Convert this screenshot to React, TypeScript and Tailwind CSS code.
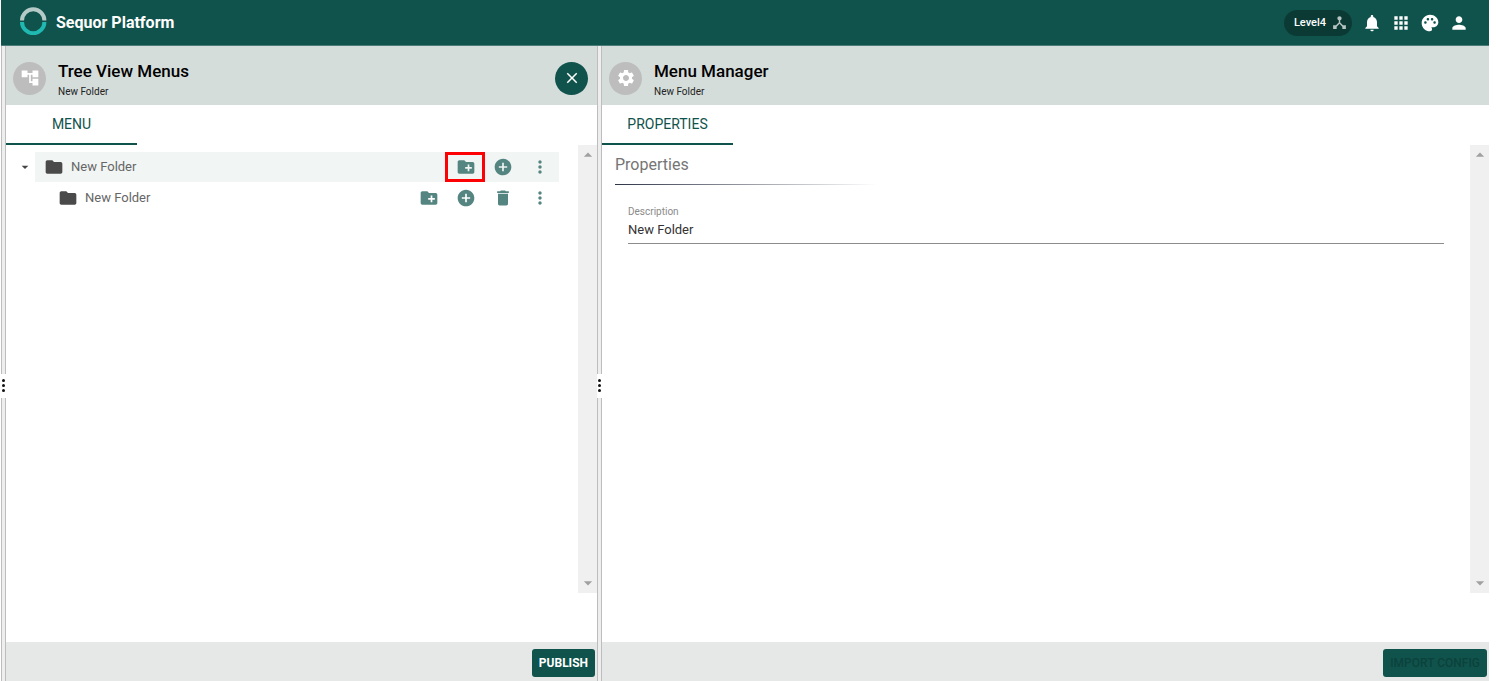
import type { ReactNode } from "react";
import {
  MdAccountTree,
  MdAddCircle,
  MdApps,
  MdArrowDropDown,
  MdArrowDropUp,
  MdClose,
  MdCreateNewFolder,
  MdDelete,
  MdDeviceHub,
  MdFolder,
  MdMoreVert,
  MdNotifications,
  MdPalette,
  MdPerson,
  MdSettings,
} from "react-icons/md";

const headerActions = [
  { name: "Notifications", icon: MdNotifications },
  { name: "Applications", icon: MdApps },
  { name: "Theme", icon: MdPalette },
  { name: "Account", icon: MdPerson },
];

const iconButton =
  "relative flex h-[30px] w-[37px] items-center justify-center text-[#558580]";

function Logo() {
  return (
    <svg className="mb-1 h-7 w-7" viewBox="0 0 28 28" fill="none" strokeWidth="4">
      <path d="M3 13.5A11.2 11.2 0 0 1 25.4 13.5" stroke="#b4cbc8" />
      <path d="M3 15A11.2 11.2 0 0 0 25.4 15" stroke="#20b9b2" />
    </svg>
  );
}

function Splitter() {
  return (
    <div className="flex w-[5px] shrink-0 flex-col items-center">
      <div className="w-full flex-1 border-x border-[#bdbdbd] bg-[#eeeeee] pb-11" />
      <div className="flex h-6 w-full flex-col items-center justify-center gap-[2px] bg-white">
        <span className="h-[3px] w-[3px] rounded-full bg-[#111111]" />
        <span className="h-[3px] w-[3px] rounded-full bg-[#111111]" />
        <span className="h-[3px] w-[3px] rounded-full bg-[#111111]" />
      </div>
      <div className="w-full flex-1 border-x border-[#bdbdbd] bg-[#eeeeee]" />
    </div>
  );
}

function ScrollTrack() {
  return (
    <div className="flex w-[19px] shrink-0 flex-col items-center justify-between bg-[#f0f0f0] text-[#a0a0a0]">
      <MdArrowDropUp className="h-5 w-5" />
      <MdArrowDropDown className="h-5 w-5" />
    </div>
  );
}

type PanelProps = {
  title: string;
  subtitle: string;
  tab: string;
  icon: ReactNode;
  action?: ReactNode;
  footer: ReactNode;
  className: string;
  children: ReactNode;
};

function Panel({ title, subtitle, tab, icon, action, footer, className, children }: PanelProps) {
  return (
    <section className={`flex min-w-0 flex-col ${className}`}>
      <header className="flex h-[59px] shrink-0 items-center bg-[#d5dddb] pr-[9px] pl-[7px]">
        <span className="mt-[5px] flex h-[33px] w-[33px] items-center justify-center rounded-full bg-[#bdbdbd] text-white">
          {icon}
        </span>
        <div className="ml-3 flex-1 pt-[10px]">
          <h2 className="text-[17px] leading-5 font-medium text-black">{title}</h2>
          <p className="mt-[3px] text-[10px] leading-4 text-[#222222]">{subtitle}</p>
        </div>
        {action}
      </header>
      <div className="flex h-10 shrink-0" role="tablist">
        <button
          type="button"
          role="tab"
          aria-selected="true"
          className="w-[131px] border-b-2 border-[#10534c] text-[14px] text-[#10534c]"
        >
          {tab}
        </button>
      </div>
      <div className="mb-[49px] flex min-h-0 flex-1">
        <div className="min-w-0 flex-1">{children}</div>
        <ScrollTrack />
      </div>
      <footer className="flex h-[39px] shrink-0 items-center justify-end bg-[#e6e8e7] pt-[2px] pr-[2px]">
        {footer}
      </footer>
    </section>
  );
}

function TreeRow({ name, root = false }: { name: string; root?: boolean }) {
  return (
    <div
      className={`flex h-[30px] items-center pr-px pl-[9px] ${root ? "flex-1 bg-[#f1f5f4]" : "mt-px ml-[43px]"}`}
    >
      <MdFolder className="h-5 w-5 text-[#4a4a4a]" />
      <span className="ml-[7px] flex-1 text-[13px] text-[#666666]">{name}</span>
      <button type="button" aria-label="New folder" className={iconButton}>
        <MdCreateNewFolder className="h-5 w-5" />
        {root && (
          <span className="absolute inset-y-0 -right-px -left-[2px] border-3 border-[#fc0204]" />
        )}
      </button>
      <button type="button" aria-label="Add item" className={iconButton}>
        <MdAddCircle className="h-5 w-5" />
      </button>
      {!root && (
        <button type="button" aria-label="Delete" className={iconButton}>
          <MdDelete className="h-5 w-5" />
        </button>
      )}
      <button type="button" aria-label="More options" className={iconButton}>
        <MdMoreVert className="h-5 w-5" />
      </button>
    </div>
  );
}

export default function App() {
  return (
    <div className="flex h-screen flex-col bg-white pr-[7px] pl-px font-[Roboto,sans-serif]">
      <header className="flex h-[46px] shrink-0 items-center border-b border-[#4a7d77] bg-[#10534c] pr-5 pl-[18px] text-white">
        <Logo />
        <h1 className="ml-[9px] flex-1 text-[16px] font-bold">Sequor Platform</h1>
        <button
          type="button"
          className="flex h-[26px] items-center gap-[5px] rounded-full bg-[#0b3a35] pr-1 pl-[10px] text-[11px] font-medium"
        >
          <span className="pt-[2px]">Level4</span>
          <MdDeviceHub className="h-[17px] w-[17px] text-[#b6c4c2]" />
        </button>
        <div className="ml-[10px] flex gap-[9px]">
          {headerActions.map((item) => {
            const Icon = item.icon;
            return (
              <button key={item.name} type="button" aria-label={item.name}>
                <Icon className="h-5 w-5" />
              </button>
            );
          })}
        </div>
      </header>

      <main className="flex min-h-0 flex-1">
        <Splitter />
        <Panel
          className="flex-[591]"
          title="Tree View Menus"
          subtitle="New Folder"
          tab="MENU"
          icon={<MdAccountTree className="h-5 w-5" />}
          action={
            <button
              type="button"
              aria-label="Close"
              className="mt-[5px] flex h-[33px] w-[33px] items-center justify-center rounded-full bg-[#10534c] text-white"
            >
              <MdClose className="h-[18px] w-[18px]" />
            </button>
          }
          footer={
            <button
              type="button"
              className="h-7 rounded-[3px] bg-[#10534c] px-[7px] text-[12px] font-bold text-white"
            >
              PUBLISH
            </button>
          }
        >
          <div className="pt-[7px] pr-[19px]">
            <div className="flex">
              <button
                type="button"
                aria-label="Collapse"
                className="flex w-[29px] items-center justify-center pl-[9px] text-[#444444]"
              >
                <MdArrowDropDown className="h-4 w-4" />
              </button>
              <TreeRow name="New Folder" root />
            </div>
            <TreeRow name="New Folder" />
          </div>
        </Panel>
        <Splitter />
        <Panel
          className="flex-[887]"
          title="Menu Manager"
          subtitle="New Folder"
          tab="PROPERTIES"
          icon={<MdSettings className="h-5 w-5" />}
          footer={
            <button
              type="button"
              disabled
              className="h-7 rounded-[3px] bg-[#10534c] px-[7px] text-[12px] font-medium text-[#0c423c]"
            >
              IMPORT CONFIG
            </button>
          }
        >
          <div className="pt-[10px] pr-[26px] pl-[13px]">
            <h3 className="text-[16px] leading-5 text-[#757575]">Properties</h3>
            <div className="mt-[9px] h-px w-[262px] bg-linear-to-r from-[#2f3547] to-transparent" />
            <div className="mt-[21px] ml-[13px]">
              <label htmlFor="description" className="block text-[10px] leading-3 text-[#8a8a8a]">
                Description
              </label>
              <input
                id="description"
                defaultValue="New Folder"
                className="block h-[26px] w-full border-b border-[#8c8c8c] pb-[2px] text-[13px] text-[#333333] outline-none"
              />
            </div>
          </div>
        </Panel>
      </main>
    </div>
  );
}
